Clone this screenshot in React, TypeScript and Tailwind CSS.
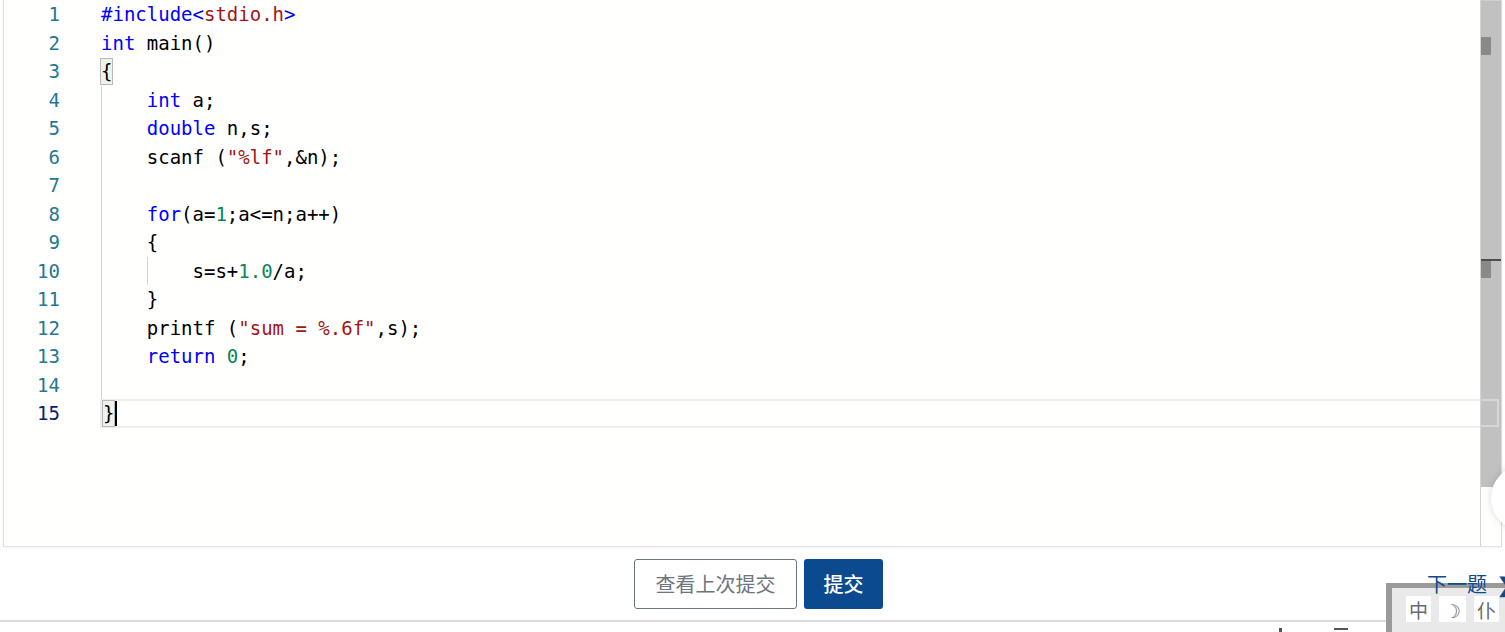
type Tok = { t: string; c?: string; br?: boolean }

const KW = 'text-[#0000ff]'
const STR = 'text-[#a31515]'
const NUM = 'text-[#098658]'

// indent = number of 4-space levels (each draws an indent guide)
const lines: { indent: number; toks: Tok[] }[] = [
  { indent: 0, toks: [{ t: '#include<', c: KW }, { t: 'stdio.h', c: STR }, { t: '>', c: KW }] },
  { indent: 0, toks: [{ t: 'int', c: KW }, { t: ' main()' }] },
  { indent: 0, toks: [{ t: '{', br: true }] },
  { indent: 1, toks: [{ t: 'int', c: KW }, { t: ' a;' }] },
  { indent: 1, toks: [{ t: 'double', c: KW }, { t: ' n,s;' }] },
  { indent: 1, toks: [{ t: 'scanf (' }, { t: '"%lf"', c: STR }, { t: ',&n);' }] },
  { indent: 1, toks: [] },
  { indent: 1, toks: [{ t: 'for', c: KW }, { t: '(a=' }, { t: '1', c: NUM }, { t: ';a<=n;a++)' }] },
  { indent: 1, toks: [{ t: '{' }] },
  { indent: 2, toks: [{ t: 's=s+' }, { t: '1.0', c: NUM }, { t: '/a;' }] },
  { indent: 1, toks: [{ t: '}' }] },
  { indent: 1, toks: [{ t: 'printf (' }, { t: '"sum = %.6f"', c: STR }, { t: ',s);' }] },
  { indent: 1, toks: [{ t: 'return', c: KW }, { t: ' ' }, { t: '0', c: NUM }, { t: ';' }] },
  { indent: 1, toks: [] },
  { indent: 0, toks: [{ t: '}', br: true }] },
]

const ACTIVE = 14

function CodeLine({ indent, toks, active }: { indent: number; toks: Tok[]; active: boolean }) {
  return (
    <div
      className={`h-[28.5px] flex items-center whitespace-pre ${
        active ? 'border-2 border-r-0 border-[#eeeeee] -ml-px' : ''
      }`}
    >
      {Array.from({ length: indent }).map((_, i) => (
        <span key={i} className="inline-block w-[4ch] h-[28.5px] border-l border-[#d3d3d3]" />
      ))}
      {toks.map((tok, i) =>
        tok.br ? (
          <span
            key={i}
            className={`inline-flex items-center h-[27px] border border-[#b9b9b9] bg-[rgba(0,100,0,0.08)] ${
              active ? '' : '-ml-px'
            }`}
          >
            {tok.t}
          </span>
        ) : (
          <span key={i} className={tok.c ?? 'text-black'}>
            {tok.t}
          </span>
        ),
      )}
      {active && <span className="inline-block w-[2px] h-[25px] bg-black" />}
    </div>
  )
}

function Editor() {
  return (
    <div className="relative w-[1499px] h-[547px] ml-[3px] flex border-l border-[#dedede] border-b border-b-[#e3e3e3] bg-[#fffffe] shadow-[0_1px_2px_rgba(0,0,0,0.06)] font-['DejaVu_Sans_Mono',monospace] text-[19px]">
      {/* gutter */}
      <div className="w-[97px] shrink-0 pr-[41px] text-right text-[#237893]">
        {lines.map((_, i) => (
          <div
            key={i}
            className={`h-[28.5px] leading-[28.5px] ${i === ACTIVE ? 'text-[#0b216f]' : ''}`}
          >
            {i + 1}
          </div>
        ))}
      </div>

      {/* code */}
      <div className="flex-1 min-w-0 flex flex-col">
        {lines.map((l, i) => (
          <CodeLine key={i} indent={l.indent} toks={l.toks} active={i === ACTIVE} />
        ))}
      </div>

      {/* right column: overview ruler + border */}
      <div className="w-[22px] shrink-0 flex flex-col border-l border-[#d4d4d4] border-r border-r-[#dadada]">
        <div className="h-[487px] bg-[#c1c1c1] border-t border-[#cfcfcf] flex flex-col">
          <div className="mt-[36px] h-[18px] w-[10px] bg-[#8a8a8a]" />
          <div className="mt-[204px] h-[2px] w-full bg-[#4f4f4f]" />
          <div className="h-[17px] w-[10px] bg-[#8a8a8a]" />
          <div className="mt-[121px] h-[28px] w-[18px] border-2 border-l-0 border-[#d6d6d6]" />
        </div>
      </div>

      {/* floating circle, mostly off screen */}
      <div className="absolute left-[1487px] top-[465px] h-[66px] w-[66px] rounded-full bg-white shadow-[0_0_8px_rgba(0,0,0,0.15)]" />
    </div>
  )
}

function ImeBar() {
  return (
    <div className="absolute left-[1386px] top-[583px] h-[60px] w-[125px] border-t-[5px] border-l-[6px] border-[#9a9a9a] bg-[#e9e9e9] flex gap-[8px] pl-[14px] pt-[8px] font-['Noto_Sans_CJK_SC',sans-serif] text-[#6a6a6a]">
      <div className="h-[26px] w-[25px] bg-white flex items-center justify-center text-[19px] leading-none">中</div>
      <div className="h-[26px] w-[27px] bg-white flex items-center justify-center text-[19px] leading-none">☽</div>
      <div className="h-[26px] w-[25px] bg-white flex items-center justify-center text-[19px] leading-none">仆</div>
    </div>
  )
}

export default function App() {
  return (
    <div className="relative w-[1505px] h-[632px] overflow-hidden bg-white">
      <Editor />

      <div className="h-[73px] grid grid-cols-[1fr_auto_1fr] items-center pl-[12px] font-['Noto_Sans_CJK_SC',sans-serif]">
        <div />
        <div className="flex gap-[7px]">
          <button className="h-[50px] w-[163px] rounded-[3px] border border-[#6c757d] bg-white text-[20px] text-[#6c757d]">
            查看上次提交
          </button>
          <button className="h-[50px] w-[79px] rounded-[3px] bg-[#0b4a8f] text-[20px] font-medium text-white">
            提交
          </button>
        </div>
        <div className="relative z-10 flex items-center justify-end mr-[-9px] text-[20px] leading-[26px] text-[#0b4a8f] whitespace-nowrap">
          <span>下一题</span>
          <span className="ml-[10px] font-bold">❯</span>
        </div>
      </div>

      <div className="h-[2px] bg-[#dadada]" />
      {/* tops of a toolbar cut off by the window edge */}
      <div className="h-[10px] flex items-end pl-[1279px] gap-[52px]">
        <div className="h-[4px] w-[3px] bg-[#555]" />
        <div className="h-[2px] w-[14px] mb-[2px] bg-[#555]" />
        <div className="h-[4px] w-[14px] ml-[50px] rounded-t-full border-2 border-b-0 border-[#555]" />
      </div>

      <ImeBar />
    </div>
  )
}
